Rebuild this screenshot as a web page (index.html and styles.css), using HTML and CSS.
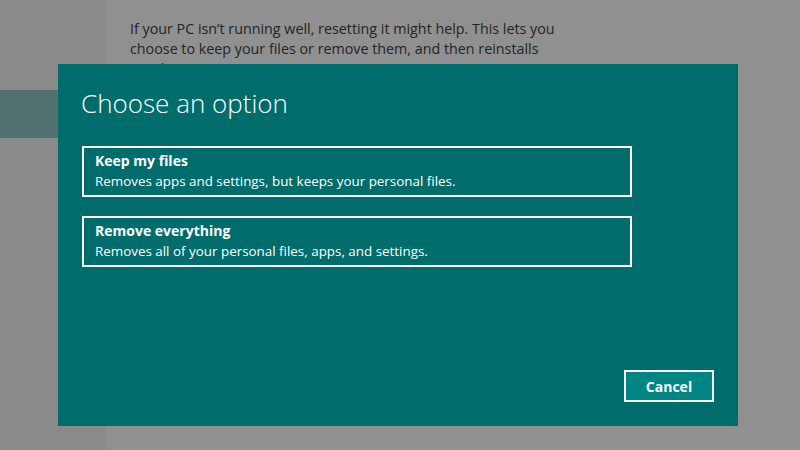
FILE: index.html
```html
<!DOCTYPE html>
<html lang="en">
<head>
<meta charset="utf-8">
<title>Choose an option</title>
<link rel="stylesheet" href="styles.css">
</head>
<body>
<div class="page">
  <nav class="sidebar">
    <div class="nav-item"></div>
  </nav>
  <main class="main">
    <p class="intro">If your PC isn’t running well, resetting it might help. This lets you choose to keep your files or remove them, and then reinstalls Windows.</p>
  </main>
  <div class="dialog">
    <h1 class="dialog-title">Choose an option</h1>
    <div class="options">
      <button class="option">
        <span class="option-title">Keep my files</span>
        <span class="option-desc">Removes apps and settings, but keeps your personal files.</span>
      </button>
      <button class="option">
        <span class="option-title">Remove everything</span>
        <span class="option-desc">Removes all of your personal files, apps, and settings.</span>
      </button>
    </div>
    <div class="actions">
      <button class="cancel">Cancel</button>
    </div>
  </div>
</div>
</body>
</html>
```
FILE: styles.css
```css
html, body {
  margin: 0;
  padding: 0;
}
body {
  width: 800px;
  height: 450px;
  overflow: hidden;
  font-family: "Open Sans", "Noto Sans", sans-serif;
}
.page {
  position: relative;
  display: flex;
  width: 800px;
  height: 450px;
}
.sidebar {
  width: 106px;
  background: #8a8a8a;
  padding-top: 90px;
  box-sizing: border-box;
}
.nav-item {
  height: 48px;
  background: #537070;
}
.main {
  flex: 1;
  background: #909090;
  padding: 19px 0 0 24px;
}
.intro {
  margin: 0;
  width: 450px;
  font-size: 14.3px;
  line-height: 20px;
  color: #242424;
}
.dialog {
  position: absolute;
  left: 58px;
  top: 64px;
  width: 680px;
  height: 362px;
  background: #006c6c;
  box-sizing: border-box;
  padding: 22px 24px 24px 24px;
  display: flex;
  flex-direction: column;
}
.dialog-title {
  margin: 0 0 0 -1px;
  font-size: 26px;
  font-weight: 300;
  line-height: 34px;
  color: #ffffff;
}
.options {
  margin-top: 26px;
  display: flex;
  flex-direction: column;
  gap: 19px;
}
.option {
  width: 550px;
  height: 51px;
  box-sizing: border-box;
  border: 2px solid #ffffff;
  background: transparent;
  padding: 3px 11px 0 11px;
  display: flex;
  flex-direction: column;
  align-items: flex-start;
  font-family: inherit;
  color: #ffffff;
  text-align: left;
}
.option-title {
  font-size: 14px;
  font-weight: 700;
  line-height: 20px;
}
.option-desc {
  font-size: 13.4px;
  line-height: 21px;
}
.actions {
  margin-top: auto;
  display: flex;
  justify-content: flex-end;
}
.cancel {
  width: 90px;
  height: 32px;
  box-sizing: border-box;
  border: 2px solid #ffffff;
  background: #008585;
  color: #ffffff;
  font-family: inherit;
  font-size: 14px;
  font-weight: 700;
  padding: 0;
}
```
